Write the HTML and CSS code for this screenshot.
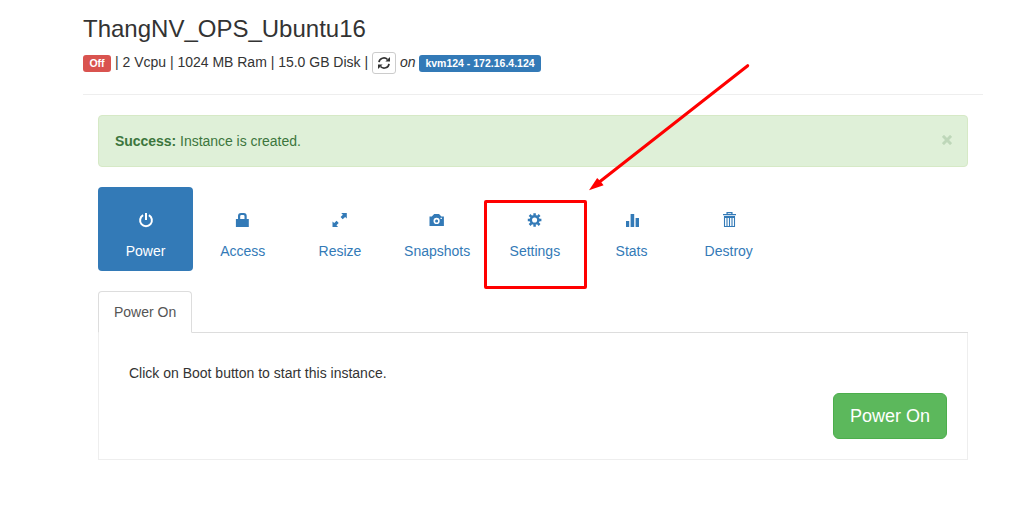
FILE: index.html
```html
<!DOCTYPE html>
<html lang="en">
<head>
<meta charset="utf-8">
<title>ThangNV_OPS_Ubuntu16</title>
<link rel="stylesheet" href="styles.css">
</head>
<body>
<div class="page">
  <header class="page-header">
    <h3 class="title">ThangNV_OPS_Ubuntu16</h3>
    <div class="summary">
      <span class="label label-danger">Off</span>
      <span class="specs">| 2 Vcpu | 1024 MB Ram | 15.0 GB Disk |</span>
      <button class="refresh" aria-label="Refresh"><svg width="12" height="12" viewBox="0 0 12 12" fill="none" stroke="#333" stroke-width="1.7"><path d="M1 5.2A4.9 4.6 0 0 1 9.5 2.5M11 6.8A4.9 4.6 0 0 1 2.5 9.5"/><path d="M12 0V4.6H7.4ZM0 12V7.4H4.6Z" fill="#333" stroke="none"/></svg></button>
      <em class="on">on</em>
      <span class="label label-primary">kvm124 - 172.16.4.124</span>
    </div>
  </header>
  <main class="content">
    <div class="alert"><span class="message"><strong>Success:</strong> Instance is created.</span><button class="close" aria-label="Close"><svg width="10" height="10" viewBox="0 0 10 10"><path d="M.9 .9 9.1 9.1M9.1 .9 .9 9.1" stroke="#bed7b9" stroke-width="3"/></svg></button></div>
    <nav class="pills">
      <a class="pill active"><svg class="icon" viewBox="0 0 16 16" fill="none" stroke="currentColor" stroke-width="2"><path d="M5.1 3.2A5.9 5.9 0 1 0 10.9 3.2M8 1V8"/></svg>Power</a>
      <a class="pill"><svg class="icon" viewBox="0 0 16 16" fill="currentColor"><path d="M.9 7H3V4Q3 1 6 1H8.7Q11.7 1 11.7 4V7H13.8V15H.9ZM5.2 7H9.5V4.2Q9.5 3 8.3 3H6.4Q5.2 3 5.2 4.2Z"/></svg>Access</a>
      <a class="pill"><svg class="icon" viewBox="0 0 16 16" fill="currentColor"><path d="M9.2 1H14.8V6.6L13.1 4.9 10.7 7.2 8.6 5.1 10.9 2.7ZM.5 15V9.4L2.2 11.1 4.6 8.8 6.7 10.9 4.4 13.3 6.1 15Z"/></svg>Resize</a>
      <a class="pill"><svg class="icon" viewBox="0 0 16 16" fill="currentColor" fill-rule="evenodd"><path d="M.5 4.5H2.8L5.2 2H10L12.4 4.5H14.9V14H.5ZM7.6 5.8A3.1 3.1 0 1 0 7.6 12 3.1 3.1 0 1 0 7.6 5.8M7.6 7.4A1.5 1.5 0 1 1 7.6 10.4 1.5 1.5 0 1 1 7.6 7.4M11.5 5.7H12.9V6.9H11.5Z"/></svg>Snapshots</a>
      <a class="pill"><svg class="icon" viewBox="0 0 16 16" fill="none" stroke="currentColor"><g transform="translate(.6)"><circle cx="8" cy="8" r="3.8" stroke-width="2.5"/><path d="M8 3.6V1.2M8 12.4V14.8M3.6 8H1.2M12.4 8H14.8M4.9 4.9 3 3M11.1 11.1 13 13M11.1 4.9 13 3M4.9 11.1 3 13" stroke-width="2.5"/></g></svg><span class="settings-name">Settings</span></a>
      <a class="pill"><svg class="icon" viewBox="0 0 16 16" fill="currentColor"><path d="M2 9H5.2V15H2ZM6.6 2H10.2V15H6.6ZM11.6 6H15V15H11.6Z"/></svg>Stats</a>
      <a class="pill"><svg class="icon" viewBox="0 0 16 16" fill="none" stroke="currentColor"><path d="M2 2.6H15M6.1 2.5V.6H10.9V2.5" stroke-width="1.3"/><path d="M3 5H14" stroke-width="2"/><path d="M3.5 4.5V14.5H13.5V4.5M6 5.5V14M8.5 5.5V14M11 5.5V14" stroke-width="1.1"/></svg>Destroy</a>
    </nav>
    <div class="tabs"><a class="tab">Power On</a></div>
    <section class="panel">
      <p>Click on Boot button to start this instance.</p>
      <button class="boot">Power On</button>
    </section>
  </main>
</div>
<div class="highlight"></div>
<svg class="arrow" width="1035" height="511" viewBox="0 0 1035 511"><path d="M747.7 65.7 600 181.5" stroke="red" stroke-width="3" stroke-linecap="round"/><path d="M589 190.3 597.2 178 600.6 181.5 603.6 185.2Z" fill="red"/></svg>
</body>
</html>
```
FILE: styles.css
```css
* { box-sizing: border-box; }
body { margin: 0; background: #fff; color: #333; font: 14px/20px "Liberation Sans", Arial, sans-serif; overflow: hidden; }
button { font-family: inherit; }
.page { width: 900px; margin-left: 83px; padding-top: 15px; }
.page-header { height: 80px; border-bottom: 1px solid #eee; }
.title { margin: 0; font-size: 24px; font-weight: 400; line-height: 27px; }
.summary { display: flex; align-items: center; height: 22px; margin-top: 10px; gap: 4px; white-space: nowrap; }
.specs, .on { margin-top: -2px; }
.specs { width: 253px; letter-spacing: -.01px; }
.on { width: 15px; }
.label { height: 17px; border-radius: 3px; color: #fff; font-size: 10.5px; font-weight: 700; line-height: 17px; text-align: center; margin-top: 1px; }
.label-danger { width: 28px; background: #d9534f; }
.label-primary { width: 122px; background: #337ab7; }
.refresh { display: flex; align-items: center; justify-content: center; width: 24px; height: 22px; padding: 0; border: 1px solid #ccc; border-radius: 3px; background: #fff; }
.content { padding: 20px 15px 0; }
.alert { display: flex; align-items: center; justify-content: space-between; height: 52px; padding: 0 15px 0 16px; border: 1px solid #d6e9c6; border-radius: 4px; background: #dff0d8; color: #3c763d; }
.message { letter-spacing: -.035px; }
.close { display: flex; padding: 0; border: 0; background: none; margin-top: -3px; }
.pills { display: flex; gap: 2px; margin-top: 20px; }
.pill { display: flex; flex-direction: column; align-items: center; width: 95.2px; height: 84px; padding-top: 25px; border-radius: 4px; color: #337ab7; }
.pill.active { background: #337ab7; color: #fff; }
.icon { width: 16px; height: 16px; margin-bottom: 13px; }
.settings-name { padding-left: 1px; }
.tabs { display: flex; height: 42px; margin-top: 20px; border-bottom: 1px solid #ddd; }
.tab { height: 42px; width: 94px; padding: 10px 15px; border: 1px solid #ddd; border-bottom-color: #fff; border-radius: 4px 4px 0 0; background: #fff; color: #555; white-space: nowrap; }
.panel { display: flex; flex-direction: column; height: 127px; padding: 30px 20px 20px 30px; border: 1px solid #eee; border-top: 0; }
.panel p { margin: 0 0 10px; }
.boot { align-self: flex-end; width: 114px; height: 46px; padding: 0; border: 1px solid #4cae4c; border-radius: 6px; background: #5cb85c; color: #fff; font-size: 18px; }
.highlight { position: absolute; left: 484px; top: 200px; width: 103px; height: 89px; border: 3px solid red; border-radius: 2px; }
.arrow { position: absolute; left: 0; top: 0; pointer-events: none; }
```
